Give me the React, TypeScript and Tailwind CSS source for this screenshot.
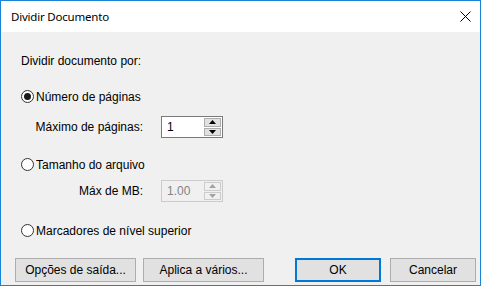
import React from "react"

function Radio({ checked, label }: { checked?: boolean; label: string }) {
  return (
    <div className="flex h-[13px] items-center">
      <span className="flex h-[13px] w-[13px] items-center justify-center rounded-full border border-[#333333] bg-white">
        {checked && <span className="h-[7px] w-[7px] rounded-full bg-[#1a1a1a]" />}
      </span>
      <span className="ml-[2px] leading-none">{label}</span>
    </div>
  )
}

function Spin({ value, disabled }: { value: string; disabled?: boolean }) {
  const arrow = disabled ? "#a3a3a3" : "#000000"
  return (
    <div
      className={
        disabled
          ? "flex h-[22px] w-[62px] border border-[#cccccc] bg-[#f0f0f0]"
          : "flex h-[22px] w-[62px] border border-[#7a7a7a] bg-white"
      }
    >
      <div className={disabled ? "flex flex-1 items-center pl-[5px] text-[#838383]" : "flex flex-1 items-center pl-[5px] text-black"}>
        {value}
      </div>
      <div className="flex w-[18px] flex-col gap-[1px] py-[1px] pr-[1px]">
        {["up", "down"].map((d) => (
          <div
            key={d}
            className={
              disabled
                ? "flex flex-1 items-center justify-center border border-[#cccccc] bg-[#f0f0f0]"
                : "flex flex-1 items-center justify-center border border-[#adadad] bg-[#e1e1e1]"
            }
          >
            <svg width="7" height="4" viewBox="0 0 7 4">
              {d === "up" ? <path d="M0 4 L3.5 0 L7 4 Z" fill={arrow} /> : <path d="M0 0 L3.5 4 L7 0 Z" fill={arrow} />}
            </svg>
          </div>
        ))}
      </div>
    </div>
  )
}

function Btn({ children, primary, w }: { children: React.ReactNode; primary?: boolean; w: string }) {
  return (
    <button
      className={
        (primary ? "border-2 border-[#0078d7] " : "border border-[#adadad] ") +
        "flex h-[24px] items-center justify-center bg-[#e1e1e1] text-black " +
        w
      }
    >
      {children}
    </button>
  )
}

export default function App() {
  return (
    <div className="h-[287px] w-[483px] bg-white">
      <div className="flex h-[286px] w-[481px] flex-col border border-[#1883d7] bg-[#f0f0f0] text-[12px] text-black [font-family:'Liberation_Sans',Arial,sans-serif]">
        <div className="flex h-[31px] shrink-0 items-center justify-between bg-white pl-[10px] pr-[9px]">
          <span className="text-[11.5px] tracking-[-0.2px] [font-family:'Noto_Sans',sans-serif]">Dividir Documento</span>
          <svg width="11" height="11" viewBox="0 0 11 11">
            <path d="M0.5 0.5 L10.5 10.5 M10.5 0.5 L0.5 10.5" stroke="#000" strokeWidth="1" />
          </svg>
        </div>

        <div className="flex flex-col pl-[20px]">
          <div className="mt-[22px] flex h-[14px] items-center">Dividir documento por:</div>

          <div className="mt-[22px]">
            <Radio checked label="Número de páginas" />
          </div>

          <div className="mt-[13px] flex items-center">
            <span className="w-[122px] text-right">Máximo de páginas:</span>
            <span className="ml-[18px]">
              <Spin value="1" />
            </span>
          </div>

          <div className="mt-[20px]">
            <Radio label="Tamanho do arquivo" />
          </div>

          <div className="mt-[9px] flex items-center">
            <span className="w-[122px] text-right">Máx de MB:</span>
            <span className="ml-[18px]">
              <Spin value="1.00" disabled />
            </span>
          </div>

          <div className="mt-[22px]">
            <Radio label="Marcadores de nível superior" />
          </div>
        </div>

        <div className="mt-[21px] flex items-center pl-[14px] pr-[4px]">
          <Btn w="w-[121px]">Opções de saída...</Btn>
          <span className="ml-[7px]">
            <Btn w="w-[121px]">Aplica a vários...</Btn>
          </span>
          <span className="ml-auto">
            <Btn primary w="w-[86px]">OK</Btn>
          </span>
          <span className="ml-[9px]">
            <Btn w="w-[86px]">Cancelar</Btn>
          </span>
        </div>
      </div>
    </div>
  )
}
